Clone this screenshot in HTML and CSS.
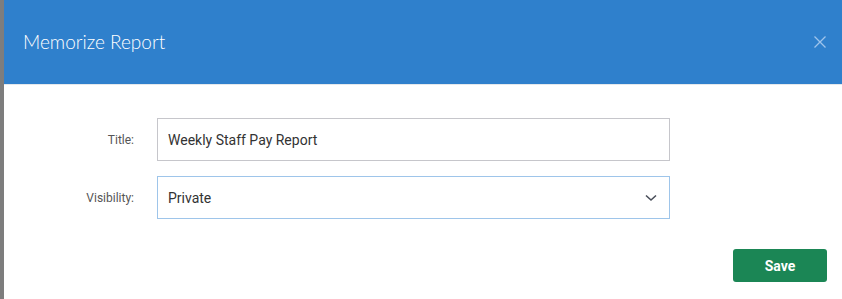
FILE: index.html
```html
<!DOCTYPE html>
<html lang="en">
<head>
    <meta charset="UTF-8">
    <title>Memorize Report</title>
    <link rel="stylesheet" href="styles.css">
</head>
<body>
    <div class="backdrop"></div>
    <div class="modal">
        <div class="modal-header">
            <h2>Memorize Report</h2>
            <button class="close-btn" aria-label="Close">
                <svg width="12" height="12" viewBox="0 0 12 12">
                    <path d="M0.5 0.5 L11.5 11.5 M11.5 0.5 L0.5 11.5" stroke="#9fc4ec" stroke-width="1.3" fill="none"/>
                </svg>
            </button>
        </div>

        <div class="modal-body">
            <div class="form-row">
                <label for="report-title">Title:</label>
                <input type="text" id="report-title" value="Weekly Staff Pay Report">
            </div>
            <div class="form-row">
                <label for="report-visibility">Visibility:</label>
                <div class="select-box">
                    <span>Private</span>
                    <svg width="12" height="8" viewBox="0 0 12 8">
                        <path d="M1 1.5 L6 6 L11 1.5" stroke="#4a4f5a" stroke-width="1.6" fill="none"/>
                    </svg>
                </div>
            </div>
        </div>

        <div class="modal-footer">
            <button class="save-btn">Save</button>
        </div>
    </div>
</body>
</html>
```

FILE: styles.css
```css
body {
    margin: 0;
    padding: 0;
    display: flex;
    height: 299px;
    overflow: hidden;
    font-family: Roboto, 'Liberation Sans', sans-serif;
}

.backdrop {
    width: 4px;
    background: #7d7d7d;
}

.modal {
    flex: 1;
    background: white;
    display: flex;
    flex-direction: column;
}

.modal-header {
    height: 84px;
    background: #2f80cc;
    border-bottom: 1px solid #e4e8ec;
    display: flex;
    align-items: center;
    justify-content: space-between;
    padding: 0 15px 0 19px;
}

.modal-header h2 {
    margin: 0;
    font-family: Lato, 'Open Sans', sans-serif;
    font-weight: 300;
    font-size: 19px;
    color: white;
    padding-bottom: 2px;
}

.close-btn {
    background: none;
    border: none;
    padding: 0;
    width: 12px;
    height: 12px;
    margin-right: 1px;
    display: flex;
    cursor: pointer;
}

.modal-body {
    padding-top: 33px;
    display: flex;
    flex-direction: column;
    gap: 15px;
}

.form-row {
    display: flex;
    align-items: center;
}

.form-row label {
    width: 130px;
    text-align: right;
    font-size: 12px;
    color: #555;
    margin-right: 23px;
}

.form-row input,
.select-box {
    box-sizing: border-box;
    width: 513px;
    height: 43px;
    padding: 0 10px;
    font-family: Roboto, sans-serif;
    font-size: 14px;
    color: #333;
    border: 1px solid #c6c6cb;
    background: white;
    outline: none;
}

.select-box {
    display: flex;
    align-items: center;
    justify-content: space-between;
    border-color: #9ec5ea;
    padding-right: 12px;
}

.modal-footer {
    display: flex;
    justify-content: flex-end;
    padding: 30px 15px 0 0;
}

.save-btn {
    width: 94px;
    height: 33px;
    background: #1b8655;
    color: white;
    border: none;
    border-radius: 3px;
    font-family: Roboto, sans-serif;
    font-weight: 700;
    font-size: 14px;
    cursor: pointer;
}
```
